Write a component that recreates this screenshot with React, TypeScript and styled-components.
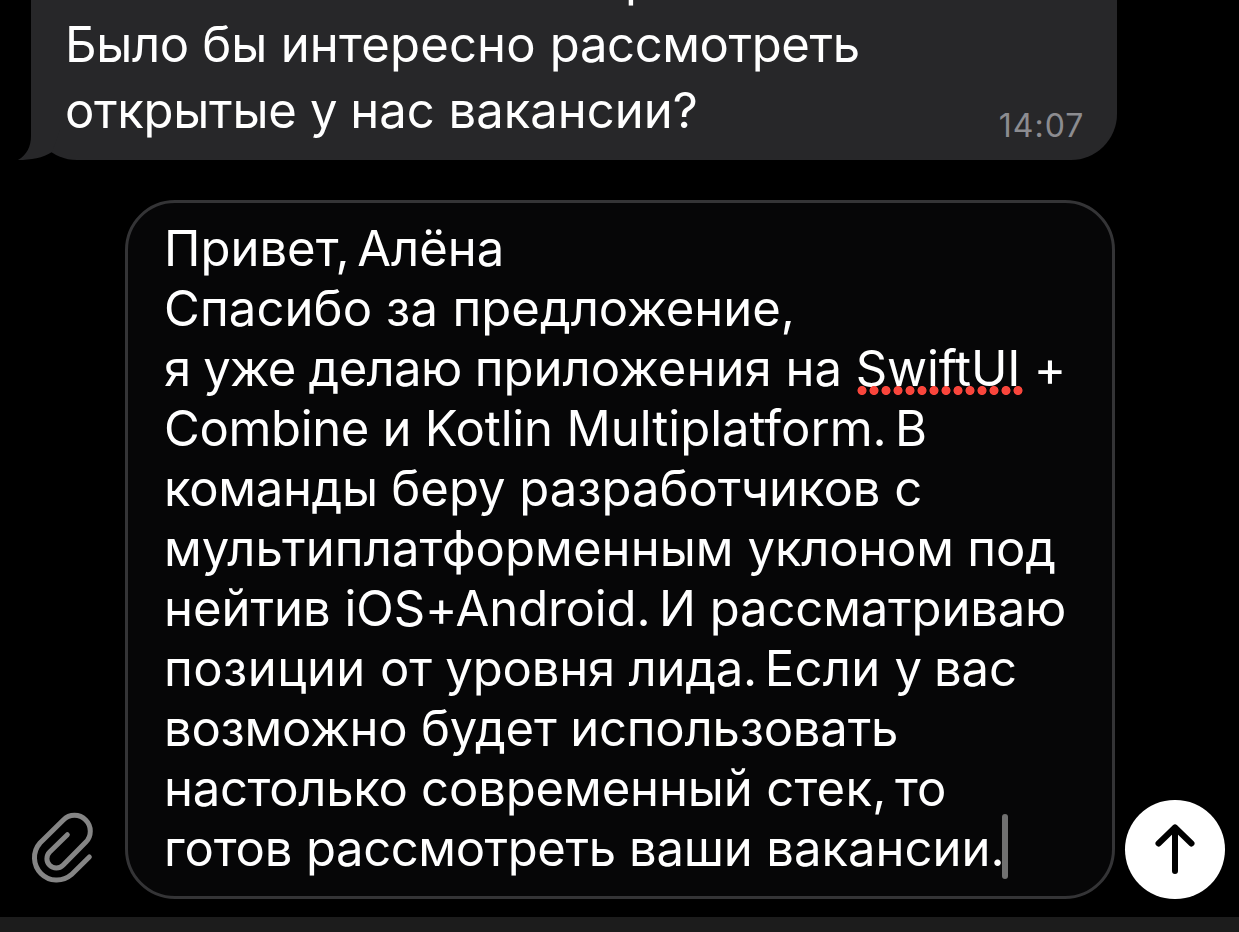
import styled, { createGlobalStyle } from "styled-components";

const GlobalStyle = createGlobalStyle`
  * {
    box-sizing: border-box;
  }
  body {
    margin: 0;
    background: #000000;
    overflow: hidden;
  }
`;
const Screen = styled.main`
  width: 1239px;
  height: 932px;
  display: flex;
  flex-direction: column;
  overflow: hidden;
  background: #000000;
  color: #ffffff;
  font-family: Inter, "Liberation Sans", sans-serif;
  font-size: 49px;
`;
const History = styled.section`
  flex: 0 0 160px;
  min-height: 0;
  display: flex;
  flex-direction: column;
  justify-content: flex-end;
  align-items: flex-start;
  height: 160px;
  padding-left: 31.4px;
`;
const Bubble = styled.div`
  position: relative;
  flex: none;
  display: flex;
  justify-content: space-between;
  align-items: flex-end;
  width: 1086px;
  padding: 20px 33px 16px 33.6px;
  border-radius: 46px;
  background: #272729;
`;
const Tail = styled.svg`
  position: absolute;
  left: -14px;
  bottom: 0;
  fill: #272729;
`;
const Message = styled.div`
  position: relative;
`;
const Line = styled.div<{ $height: number; $indent?: number }>`
  height: ${(props) => props.$height}px;
  line-height: ${(props) => props.$height}px;
  padding-left: ${(props) => props.$indent ?? 0}px;
  white-space: pre;
`;
const Word = styled.span<{ $track?: number; $space?: number }>`
  letter-spacing: ${(props) => props.$track ?? 0}px;
  word-spacing: ${(props) => props.$space ?? 0}px;
`;
const Misspelled = styled(Word)`
  position: relative;
  display: inline-block;
  &::after {
    content: "";
    position: absolute;
    left: 0;
    top: 47px;
    width: 168px;
    height: 9px;
    background: radial-gradient(circle, #f9463c 4.1px, transparent 4.9px) 0 0 /
      12px 9px repeat-x;
  }
`;
const Time = styled.time`
  margin-bottom: -2px;
  font-size: 32px;
  line-height: 40px;
  letter-spacing: 1px;
  color: #8c8c90;
`;
const Composer = styled.section`
  flex: none;
  display: flex;
  align-items: flex-end;
  height: 699px;
  margin-top: 40px;
`;
const AttachButton = styled.button`
  flex: 0 0 125px;
  display: flex;
  padding: 0 0 15px 29.5px;
  border: 0;
  background: none;
`;
const Field = styled.div`
  flex: 0 0 989.5px;
  height: 699px;
  padding: 16px 20px 0 36px;
  border: 3px solid #343436;
  border-radius: 50px;
  background: #060607;
`;
const Caret = styled.span`
  position: absolute;
  right: -3px;
  top: -5px;
  width: 6px;
  height: 65px;
  border-radius: 3px;
  background: #707070;
`;
const LastWord = styled(Word)`
  position: relative;
  display: inline-block;
`;
const SendButton = styled.button`
  flex: none;
  display: flex;
  align-items: center;
  justify-content: center;
  width: 99.4px;
  height: 99.4px;
  margin-left: 10.8px;
  padding: 0;
  border: 0;
  border-radius: 50%;
  background: #ffffff;
`;
const Keyboard = styled.footer`
  flex: none;
  height: 15px;
  margin-top: 18px;
  background: #1c1c1c;
`;

// text, letter spacing, word spacing
type Part = [string, number, number?];

const incoming: Part[][] = [
  [["Было ", -0.35], ["бы ", -0.2], ["интересно ", 0.2], ["рассмотреть", -0.4]],
  [["открытые ", -0.3], ["у ", -0.5], ["нас ", 0], ["вакансии?", 0]],
];
const draft: Part[][] = [
  [["Привет, ", 0, -6], ["Алёна", 0]],
  [["Спасибо ", 0.1], ["за ", 0.3], ["предложение,", 0]],
  [
    ["я ", -0.85],
    ["уже ", -0.8],
    ["делаю ", -0.67],
    ["приложения ", 0.05],
    ["на ", 0],
    ["SwiftUI ", -0.15],
    ["+", 0],
  ],
  [
    ["Combine ", -0.36],
    ["и ", -0.2],
    ["Kotlin ", -0.17],
    ["Multiplatform. ", 0, -5.5],
    ["В", 0],
  ],
  [["команды ", -0.3], ["беру ", 0], ["разработчиков ", 0], ["с", 0]],
  [["мультиплатформенным ", 0.09], ["уклоном ", -0.22], ["под", -0.1]],
  [["нейтив ", 0], ["iOS+Android. ", -0.12, -5], ["И ", 0], ["рассматриваю", -0.15]],
  [
    ["позиции ", 0.45],
    ["от ", -0.2],
    ["уровня ", -0.2],
    ["лида. ", -0.25, -5.5],
    ["Если ", 0.25],
    ["у ", -0.95],
    ["вас", 0],
  ],
  [["возможно ", -0.23], ["будет ", -0.2], ["использовать", -0.2]],
  [["настолько ", -0.3], ["современный ", -0.13], ["стек, ", 0.2, -5.5], ["то", 0]],
  [["готов ", -0.13], ["рассмотреть ", -0.42], ["ваши ", -0.2], ["вакансии.", 0]],
];

function renderPart([text, track, space]: Part) {
  if (text === "SwiftUI ") {
    return (
      <Misspelled key={text} $track={track}>
        {text}
      </Misspelled>
    );
  }
  if (text === "вакансии.") {
    return (
      <LastWord key={text} $track={track}>
        {text}
        <Caret />
      </LastWord>
    );
  }
  return (
    <Word key={text} $track={track} $space={space}>
      {text}
    </Word>
  );
}

function App() {
  return (
    <Screen>
      <GlobalStyle />
      <History>
        <Bubble>
          <Tail width="60" height="50" viewBox="17 110 60 50">
            <path d="M31 110V136C31 146 27 155 18 160C31 160 43 158 52 152L60 130V110Z" />
          </Tail>
          <Message>
            <Line $height={66} $indent={560}>
              р
            </Line>
            {incoming.map((parts, i) => (
              <Line key={i} $height={66}>
                {parts.map(renderPart)}
              </Line>
            ))}
          </Message>
          <Time>14:07</Time>
        </Bubble>
      </History>
      <Composer>
        <AttachButton aria-label="Прикрепить">
          <svg
            width="64"
            height="73"
            viewBox="90 93 192 219"
            fill="none"
            stroke="#858585"
            strokeWidth="15"
            strokeLinecap="round"
          >
            <path d="M268 231L214 284A67 67 0 0 1 120 189L190 120A47 47 0 0 1 257 187L189 256A28 28 0 0 1 149 216L202 164" />
          </svg>
        </AttachButton>
        <Field>
          {draft.map((parts, i) => (
            <Line key={i} $height={60}>
              {parts.map(renderPart)}
            </Line>
          ))}
        </Field>
        <SendButton aria-label="Отправить">
          <svg
            width="50"
            height="60"
            viewBox="0 0 50 60"
            fill="none"
            stroke="#000000"
            strokeWidth="6"
            strokeLinecap="round"
            strokeLinejoin="round"
          >
            <path d="M25 8.500V52M8.500 24.500L25 8.500L41.500 24.500" />
          </svg>
        </SendButton>
      </Composer>
      <Keyboard />
    </Screen>
  );
}

export default App;
